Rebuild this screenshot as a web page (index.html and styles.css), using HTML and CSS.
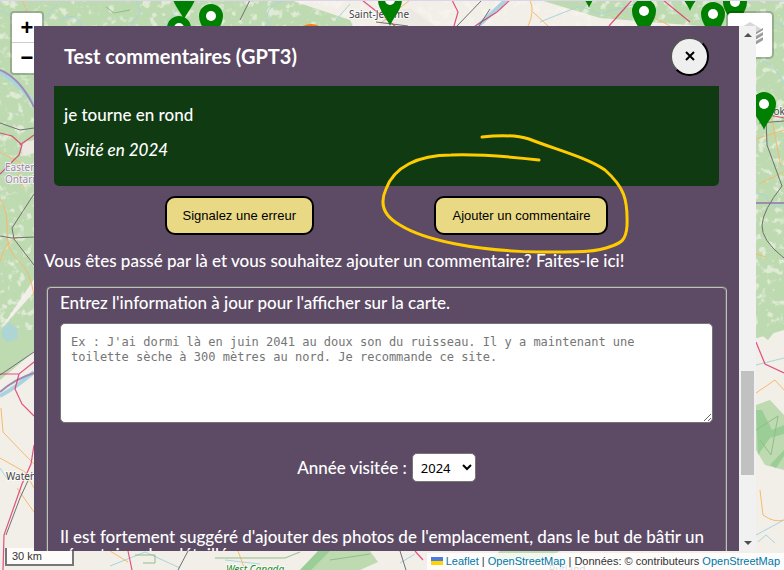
FILE: index.html
```html
<!DOCTYPE html>
<html lang="fr">
<head>
<meta charset="utf-8">
<meta name="viewport" content="width=device-width, initial-scale=1">
<title>Test commentaires (GPT3)</title>
<link rel="stylesheet" href="styles.css">
</head>
<body>
<svg class="map" viewBox="0 0 784 570" preserveAspectRatio="xMidYMid slice" aria-hidden="true">
  <defs>
    <g id="pin"><path d="M0 0C-2-7-12-16-12-26A12 12 0 0 1 12-26C12-16 2-7 0 0Z" fill="#008000"/><circle cy="-26" r="5" fill="#fff"/></g>
    <filter id="wood" x="0" y="0" width="100%" height="100%">
      <feTurbulence type="fractalNoise" baseFrequency="0.12" numOctaves="3" seed="8"/>
      <feColorMatrix values="0 0 0 0 0.94  0 0 0 0 0.93  0 0 0 0 0.86  6 0 0 0 -3.3"/>
    </filter>
  </defs>
  <rect width="784" height="570" fill="#f2efe9"/>
  <path fill="#bddab1" d="M0 0H290L350 20L360 40H0ZM540 0H784V320L768 340L755 330V26H700L600 18ZM0 0H40V270L0 330ZM0 330L36 290V350L0 380ZM750 0H784V330L750 340Z"/>
  <path fill="#bddab1" d="M318 551H370L378 562L360 570H300ZM500 551H560L540 562L490 560ZM756 405L770 400L784 415V470L765 465L756 450Z"/>
  <path fill="#8dc98b" opacity=".7" d="M756 410H762L772 430L784 425V434L770 438L758 455ZM770 465L784 450V456L776 468ZM318 551L300 570H311L330 551Z"/>
  <rect width="784" height="330" filter="url(#wood)" opacity=".6"/>
  <path fill="#ece8e2" d="M378 26L390 12L410 8L435 26ZM20 144L34 140V153L24 156Z"/>
  <path fill="#aad3df" opacity=".8" d="M2 328L9 322L17 329L18 338L8 342L2 337Z"/>
  <g fill="none" stroke="#aad3df">
    <path stroke-width="4" d="M0 72Q20 84 34 104M0 396Q15 388 34 372M478 26L506 0"/>
    <path stroke-width="1" d="M0 468L8 480M130 26L141 12L136 0M165 26L180 5M0 9L12 18L27 10L34 17M270 26Q260 8 285 0M336 20L350 4M0 174L17 168L24 173M752 195Q764 190 768 200T784 205M756 365L784 358M756 535L784 520M110 566L145 552L180 568M225 560L260 564M540 22L580 6L600 14L635 4M60 20Q75 10 82 26M44 19L57 4M700 21L712 5M760 14L784 27M762 60Q774 64 784 83M400 563L415 554M758 542L766 535L775 543"/>
    <path stroke="#9e8db0" stroke-width="2" d="M0 70Q20 78 34 107M0 392Q15 379 34 373M756 203H784"/>
    <path stroke="#f7ba69" d="M0 199Q8 210 7 230T18 260T34 295M19 237Q5 240 0 262M1 408L3 432Q20 450 34 464M17 488L34 512M22 0L27 10L20 26M528 26Q535 12 530 0M533 12L548 26M756 393L775 380L784 390M759 184L784 172M760 490L763 515Q774 523 784 520M110 551L128 562M238 551L245 570M756 139L784 130M756 254L766 257M0 458L25 472L34 488M770 110L781 167M640 0L655 18L670 26M382 22L410 0M0 152L21 163L18 178L25 189"/>
    <path stroke="#dc2a67" stroke-width="1.2" opacity=".8" d="M0 133L12 136L22 145L19 155L0 174M20 145L34 135M0 374L19 374L34 362M19 374L15 389L22 404L34 416M34 445L31 464L22 484L4 535L3 570M362 0L395 26M452 0L458 12L454 26M475 26L497 12L510 0M609 26L632 0M663 0L690 22M756 342L765 364L784 373M756 112L784 118M128 551L132 570M415 551L423 560"/>
    <path stroke="#707070" stroke-width="1" d="M0 123L20 130L34 128M34 194L12 228L14 239L34 265M0 236L12 238L34 237M0 375L34 352M240 20L250 0M376 22L408 26M457 26L482 0M479 26L490 9M755 115L766 118L767 145L782 186Q763 210 762 225T784 258M400 551L406 570M188 551L178 570M759 123L784 121M32 472L20 498L6 535"/>
    <path stroke="#91bd88" d="M106 7L114 13L130 10M135 555H155V563H143M215 558H285L300 552M330 560L370 554M756 430L778 416L771 455L760 440"/>
  </g>
  <path fill="#ff7f0e" d="M303 26Q311 22 319 26Z"/>
  <g class="place">
    <text x="349" y="18">Saint-Jérôme</text>
    <text x="5" y="171" class="region">Eastern</text><text x="5" y="183" class="region">Ontario</text>
    <text x="6" y="480">Watertown</text><text x="736" y="115">Sherbrooke</text>
    <text x="226" y="573" class="park">West Canada</text><text x="549" y="573">Rutland</text>
  </g>
  <use href="#pin" x="184" y="20"/><use href="#pin" x="179" y="54"/><use href="#pin" x="211" y="42"/>
  <use href="#pin" x="390" y="26"/><use href="#pin" x="589" y="8"/><use href="#pin" x="644" y="37"/>
  <use href="#pin" x="690" y="11"/><use href="#pin" x="735" y="28"/><use href="#pin" x="713" y="40"/>
  <use href="#pin" x="764" y="130"/>
  <rect width="784" height="1" fill="#dcd5ea"/>
</svg>

<div class="zoom-control">
  <button type="button" aria-label="Zoom avant">+</button>
  <button type="button" aria-label="Zoom arrière">−</button>
</div>
<button type="button" class="layers" aria-label="Couches">
  <svg viewBox="0 0 26 26"><path fill="#aaa" d="M0 18L13 26L26 18V15L13 22L0 15ZM0 13L13 21L26 13V10L13 17L0 10Z"/><path fill="#999" d="M13 26L26 18V16L13 24ZM13 21L26 13V11L13 19Z"/><path fill="#d7d7d7" d="M0 8L13 0L26 8L13 15Z"/><path fill="#999" d="M13 16L26 8V6L13 14Z"/></svg>
</button>
<div class="scale">30 km</div>
<footer class="attribution">
  <svg class="flag" viewBox="0 0 12 8" aria-hidden="true"><path fill="#4c7be1" d="M0 0h12v4H0z"/><path fill="#ffd500" d="M0 4h12v4H0z"/></svg>
  <a href="#">Leaflet</a> | <a href="#">OpenStreetMap</a> | Données: © contributeurs <a href="#">OpenStreetMap</a>
</footer>

<main class="dialog" role="dialog" aria-labelledby="title">
  <div class="body">
    <header class="head">
      <h1 id="title">Test commentaires (GPT3)</h1>
      <button type="button" class="close" aria-label="Fermer"><svg viewBox="0 0 10 10"><path d="M1 1L9 9M9 1L1 9"/></svg></button>
    </header>
    <section class="comment">
      <p>je tourne en rond</p>
      <p><em>Visité en 2024</em></p>
    </section>
    <div class="actions">
      <button type="button">Signalez une erreur</button>
      <div class="circled">
        <button type="button">Ajouter un commentaire</button>
        <svg class="stroke" viewBox="370 120 270 140" aria-hidden="true"><path d="M482 137C500 135 516 135 529 139C554 149 586 157 605 170C624 187 628 199 627 226C626 241 620 243 612 246C596 252 585 252 540 252C475 251 424 240 400 225C380 214 381 200 386 189C394 167 418 155 451 155C482 154 513 157 539 160"/></svg>
      </div>
    </div>
    <p class="invite">Vous êtes passé par là et vous souhaitez ajouter un commentaire? Faites-le ici!</p>
    <form class="form">
      <label class="line" for="info">Entrez l'information à jour pour l'afficher sur la carte.</label>
      <textarea id="info" placeholder="Ex : J'ai dormi là en juin 2041 au doux son du ruisseau. Il y a maintenant une toilette sèche à 300 mètres au nord. Je recommande ce site."></textarea>
      <div class="year">
        <label for="year">Année visitée :</label>
        <select id="year"><option>2024</option></select>
      </div>
      <p class="line">Il est fortement suggéré d'ajouter des photos de l'emplacement, dans le but de bâtir un répertoire plus détaillé.</p>
    </form>
  </div>
  <div class="scrollbar" aria-hidden="true">
    <i class="arrow up"></i>
    <div class="track"><div class="thumb"></div></div>
    <i class="arrow down"></i>
  </div>
</main>
</body>
</html>
```
FILE: styles.css
```css
* { box-sizing: border-box; }

body {
  margin: 0;
  height: 100vh;
  overflow: hidden;
  display: flex;
  padding: 26px 28px 19px 34px;
  font: 500 17px/18px "Trebuchet MS", Lato, sans-serif;
  color: #fff;
}

button, select { font-family: "Liberation Sans", sans-serif; color: #000; }

/* Map and its controls, underneath the dialog */
.map { position: absolute; inset: 0; width: 100%; height: 100%; }
.place { font: 10px "Noto Sans", sans-serif; fill: #444; paint-order: stroke; stroke: #ffffffb0; stroke-width: 2px; }
.region { fill: #a286af; }
.park { fill: #168c28; font-style: italic; }

.zoom-control {
  position: absolute;
  left: 10px;
  top: 11px;
  width: 34px;
  border: 2px solid #0003;
  border-radius: 4px;
  background-clip: padding-box;
  background-color: #fff;
}
.zoom-control button {
  display: block;
  width: 100%;
  height: 30px;
  padding: 0;
  border: 0;
  background: none;
  font: bold 22px/30px "Liberation Sans", sans-serif;
}
.zoom-control button:first-child { border-bottom: 1px solid #ccc; }

.layers {
  position: absolute;
  right: 10px;
  top: 11px;
  width: 48px;
  height: 48px;
  padding: 9px;
  border: 2px solid #0003;
  border-radius: 5px;
  background: #fff padding-box;
}
.layers svg { display: block; width: 26px; height: 26px; }

.scale {
  position: absolute;
  left: 5px;
  bottom: 4px;
  width: 69px;
  height: 18px;
  padding: 0 5px;
  border: 2px solid #777;
  border-top: 0;
  background: #fffc;
  color: #333;
  font: 11px/16px "Liberation Sans", sans-serif;
}

.attribution {
  position: absolute;
  right: 0;
  bottom: 0;
  height: 17px;
  padding: 0 4px;
  background: #fffc;
  color: #333;
  font: 11px/16px "Liberation Sans", sans-serif;
  white-space: nowrap;
}
.attribution a { color: #0078a8; text-decoration: none; }
.flag { width: 12px; height: 8px; }

/* Dialog */
.dialog { position: relative; flex: 1; display: flex; min-width: 0; background: #5d4b66; }
.body { flex: 1; min-width: 0; overflow: hidden; padding: 0 10px; }

.head {
  display: flex;
  align-items: center;
  justify-content: space-between;
  height: 60px;
  padding: 0 20px;
}
h1 { margin: 0; font-size: 20px; line-height: 24px; }
.close {
  display: grid;
  place-items: center;
  width: 39px;
  height: 39px;
  padding: 0;
  border: 2px outset #000;
  border-radius: 50%;
  background: #efefef;
}
.close svg { width: 10px; height: 10px; fill: none; stroke: #000; stroke-width: 2; }

.comment {
  height: 100px;
  margin: 0 10px;
  padding: 20px 10px;
  border-radius: 0 0 5px 5px;
  background: #103a12;
}
.comment p { margin: 0 0 17px; }

.actions { display: flex; justify-content: space-evenly; padding: 10px 0 0; }
.actions button {
  height: 39px;
  padding: 0 16px;
  border: 2px solid #000;
  border-radius: 10px;
  background: #e9d985;
  font-size: 13px;
}
.circled { position: relative; }
.stroke {
  position: absolute;
  left: -64px;
  top: -76px;
  width: 270px;
  height: 140px;
  fill: none;
  stroke: #fc0;
  stroke-width: 3;
  stroke-linecap: round;
  pointer-events: none;
}

.invite { margin: 17px 0 16px; }
.form {
  margin: 0 2px;
  height: 400px;
  padding: 6px 12px;
  border: 2px groove silver;
  border-radius: 5px;
}
.line { display: block; margin: 0; }
textarea {
  display: block;
  width: 100%;
  height: 100px;
  margin: 11px 0 30px;
  padding: 11px 20px 10px 10px;
  border: 1px solid #767676;
  border-radius: 5px;
  background: #fff;
  font: 12px/15px "DejaVu Sans Mono", monospace;
  resize: vertical;
}
textarea::placeholder { color: #757575; }
.year { display: flex; justify-content: center; align-items: center; gap: 5px; margin-bottom: 46px; }
select {
  width: 64px;
  height: 29px;
  padding: 0 4px;
  border: 1px solid #767676;
  border-radius: 5px;
  background: #fff;
  font: 13px "Noto Sans", sans-serif;
}

.scrollbar { flex: none; display: flex; flex-direction: column; align-items: center; width: 17px; background: #f1f1f1; }
.arrow { height: 17px; display: grid; place-items: center; }
.arrow::before { content: ""; border: 4px solid transparent; }
.up::before { border-top: 0; border-bottom-color: #505050; }
.down::before { border-bottom: 0; border-top-color: #505050; }
.track { flex: 1; width: 13px; display: flex; flex-direction: column; justify-content: flex-end; padding-bottom: 59px; }
.thumb { height: 24%; background: #c1c1c1; }
```
